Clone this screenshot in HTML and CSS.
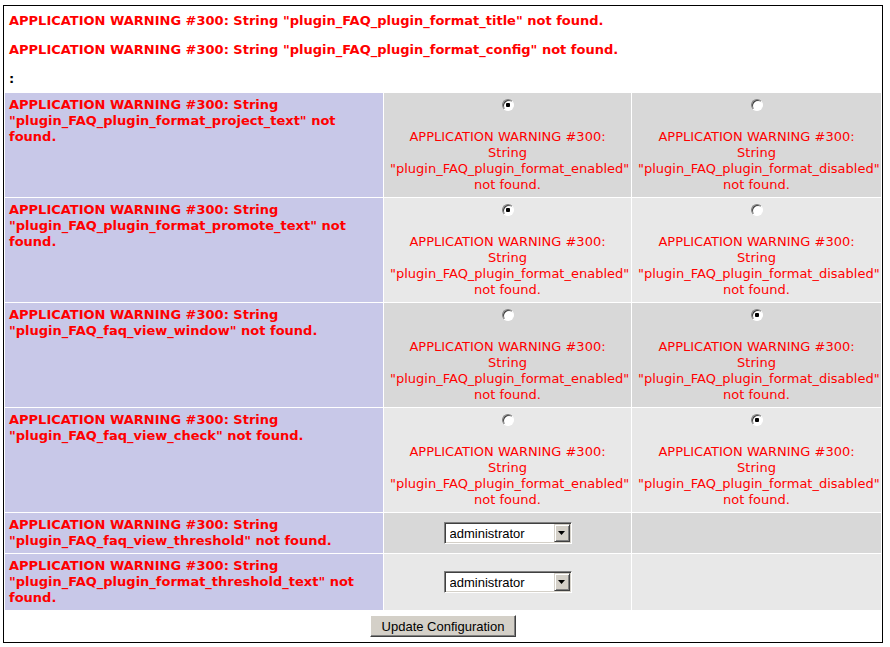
FILE: index.html
```html
<!DOCTYPE html>
<html lang="en">
<head>
    <meta charset="UTF-8">
    <meta name="viewport" content="width=device-width, initial-scale=1.0">
    <title>FAQ Plugin Configuration</title>
    <link rel="stylesheet" href="styles.css">
</head>
<body>
    <div class="page">
        <form action="#" method="post">
            <table class="config">
                <colgroup>
                    <col class="col-cat">
                    <col class="col-enabled">
                    <col class="col-disabled">
                </colgroup>
                <tr>
                    <td class="form-title" colspan="3">
                        <p class="warning">APPLICATION WARNING #300: String "plugin_FAQ_plugin_format_title" not found.</p>
                        <p class="warning">APPLICATION WARNING #300: String "plugin_FAQ_plugin_format_config" not found.</p>
                        :
                    </td>
                </tr>

                <tr class="row-1">
                    <td class="category">
                        <p class="warning">APPLICATION WARNING #300: String "plugin_FAQ_plugin_format_project_text" not found.</p>
                    </td>
                    <td class="option">
                        <input class="radio" type="radio" name="project_text" value="1" checked>
                        <p class="warning">APPLICATION WARNING #300: String "plugin_FAQ_plugin_format_enabled" not found.</p>
                    </td>
                    <td class="option">
                        <input class="radio" type="radio" name="project_text" value="0">
                        <p class="warning">APPLICATION WARNING #300: String "plugin_FAQ_plugin_format_disabled" not found.</p>
                    </td>
                </tr>

                <tr class="row-2">
                    <td class="category">
                        <p class="warning">APPLICATION WARNING #300: String "plugin_FAQ_plugin_format_promote_text" not found.</p>
                    </td>
                    <td class="option">
                        <input class="radio" type="radio" name="promote_text" value="1" checked>
                        <p class="warning">APPLICATION WARNING #300: String "plugin_FAQ_plugin_format_enabled" not found.</p>
                    </td>
                    <td class="option">
                        <input class="radio" type="radio" name="promote_text" value="0">
                        <p class="warning">APPLICATION WARNING #300: String "plugin_FAQ_plugin_format_disabled" not found.</p>
                    </td>
                </tr>

                <tr class="row-1">
                    <td class="category">
                        <p class="warning">APPLICATION WARNING #300: String "plugin_FAQ_faq_view_window" not found.</p>
                    </td>
                    <td class="option">
                        <input class="radio" type="radio" name="view_window" value="1">
                        <p class="warning">APPLICATION WARNING #300: String "plugin_FAQ_plugin_format_enabled" not found.</p>
                    </td>
                    <td class="option">
                        <input class="radio" type="radio" name="view_window" value="0" checked>
                        <p class="warning">APPLICATION WARNING #300: String "plugin_FAQ_plugin_format_disabled" not found.</p>
                    </td>
                </tr>

                <tr class="row-2">
                    <td class="category">
                        <p class="warning">APPLICATION WARNING #300: String "plugin_FAQ_faq_view_check" not found.</p>
                    </td>
                    <td class="option">
                        <input class="radio" type="radio" name="view_check" value="1">
                        <p class="warning">APPLICATION WARNING #300: String "plugin_FAQ_plugin_format_enabled" not found.</p>
                    </td>
                    <td class="option">
                        <input class="radio" type="radio" name="view_check" value="0" checked>
                        <p class="warning">APPLICATION WARNING #300: String "plugin_FAQ_plugin_format_disabled" not found.</p>
                    </td>
                </tr>

                <tr class="row-1">
                    <td class="category">
                        <p class="warning">APPLICATION WARNING #300: String "plugin_FAQ_faq_view_threshold" not found.</p>
                    </td>
                    <td class="option">
                        <span class="select-box">
                            <select name="view_threshold">
                                <option>viewer</option>
                                <option>reporter</option>
                                <option>updater</option>
                                <option>developer</option>
                                <option>manager</option>
                                <option selected>administrator</option>
                            </select>
                            <span class="select-arrow"><svg width="7" height="4" viewBox="0 0 7 4"><polygon points="0,0 7,0 3.5,4" fill="#000"/></svg></span>
                        </span>
                    </td>
                    <td class="option"></td>
                </tr>

                <tr class="row-2">
                    <td class="category">
                        <p class="warning">APPLICATION WARNING #300: String "plugin_FAQ_plugin_format_threshold_text" not found.</p>
                    </td>
                    <td class="option">
                        <span class="select-box">
                            <select name="threshold_text">
                                <option>viewer</option>
                                <option>reporter</option>
                                <option>updater</option>
                                <option>developer</option>
                                <option>manager</option>
                                <option selected>administrator</option>
                            </select>
                            <span class="select-arrow"><svg width="7" height="4" viewBox="0 0 7 4"><polygon points="0,0 7,0 3.5,4" fill="#000"/></svg></span>
                        </span>
                    </td>
                    <td class="option"></td>
                </tr>

                <tr>
                    <td class="center" colspan="3">
                        <input type="submit" class="button" value="Update Configuration">
                    </td>
                </tr>
            </table>
        </form>
    </div>
</body>
</html>
```

FILE: styles.css
```css
body {
    margin: 0;
    font-family: "DejaVu Sans", Verdana, sans-serif;
    font-size: 13px;
    line-height: 16px;
    color: #000;
    background-color: #fff;
}
.page {
    padding: 5px 7px 0 3px;
}
.config {
    width: 880px;
    table-layout: fixed;
    border: 1px solid #000;
    border-spacing: 1px;
    background-color: #fff;
}
.config td {
    padding: 4px;
}
.col-cat {
    width: 378px;
}
.col-enabled {
    width: 247px;
}
.col-disabled {
    width: 249px;
}
.form-title {
    font-weight: bold;
    vertical-align: top;
    padding-top: 6px !important;
    padding-bottom: 5px !important;
}
.warning {
    margin: 0;
    color: #f00;
}
.form-title .warning {
    margin-bottom: 13px;
}
.category {
    background-color: #c8c8e8;
    font-weight: bold;
    vertical-align: top;
}
.option {
    text-align: center;
    vertical-align: top;
}
.row-1 .option {
    background-color: #d8d8d8;
}
.row-2 .option {
    background-color: #e8e8e8;
}
.option .warning {
    margin-top: 18px;
    padding: 0 2px;
}
.center {
    text-align: center;
}

/* classic sunken radio */
.radio {
    appearance: none;
    display: block;
    width: 12px;
    height: 12px;
    margin: 2px auto 0;
    border: 1px solid;
    border-color: #808080 #fff #fff #808080;
    border-radius: 50%;
    box-shadow: inset 1px 1px #404040;
    background-color: #fff;
}
.radio:checked {
    background-image: radial-gradient(circle, #000 0, #000 2px, transparent 2.5px);
}

/* select with a raised arrow button */
.select-box {
    position: relative;
    display: inline-block;
    width: 128px;
    height: 22px;
    vertical-align: middle;
}
.option:has(.select-box) {
    vertical-align: middle;
}
.select-box select {
    appearance: none;
    box-sizing: border-box;
    width: 100%;
    height: 100%;
    margin: 0;
    padding: 0 0 0 5px;
    border: 1px solid;
    border-color: #808080 #fff #fff #808080;
    box-shadow: inset 1px 1px #404040, inset -1px -1px #d4d0c8;
    border-radius: 0;
    background-color: #fff;
    color: #000;
    font-family: "Liberation Sans", Arial, sans-serif;
    font-size: 13px;
}
.select-arrow {
    position: absolute;
    top: 2px;
    right: 2px;
    box-sizing: border-box;
    width: 16px;
    height: 18px;
    display: flex;
    align-items: center;
    justify-content: center;
    background-color: #d4d0c8;
    border: 1px solid;
    border-color: #d4d0c8 #404040 #404040 #d4d0c8;
    box-shadow: inset 1px 1px #fff, inset -1px -1px #808080;
    pointer-events: none;
}
.select-arrow svg {
    display: block;
}

.button {
    box-sizing: border-box;
    width: 146px;
    height: 22px;
    margin: 0;
    padding: 0 8px;
    font-family: "Liberation Sans", Arial, sans-serif;
    font-size: 13px;
    color: #000;
    background-color: #d4d0c8;
    border: 1px solid;
    border-color: #fff #404040 #404040 #fff;
    box-shadow: inset -1px -1px #808080;
    border-radius: 0;
    vertical-align: middle;
}
```
